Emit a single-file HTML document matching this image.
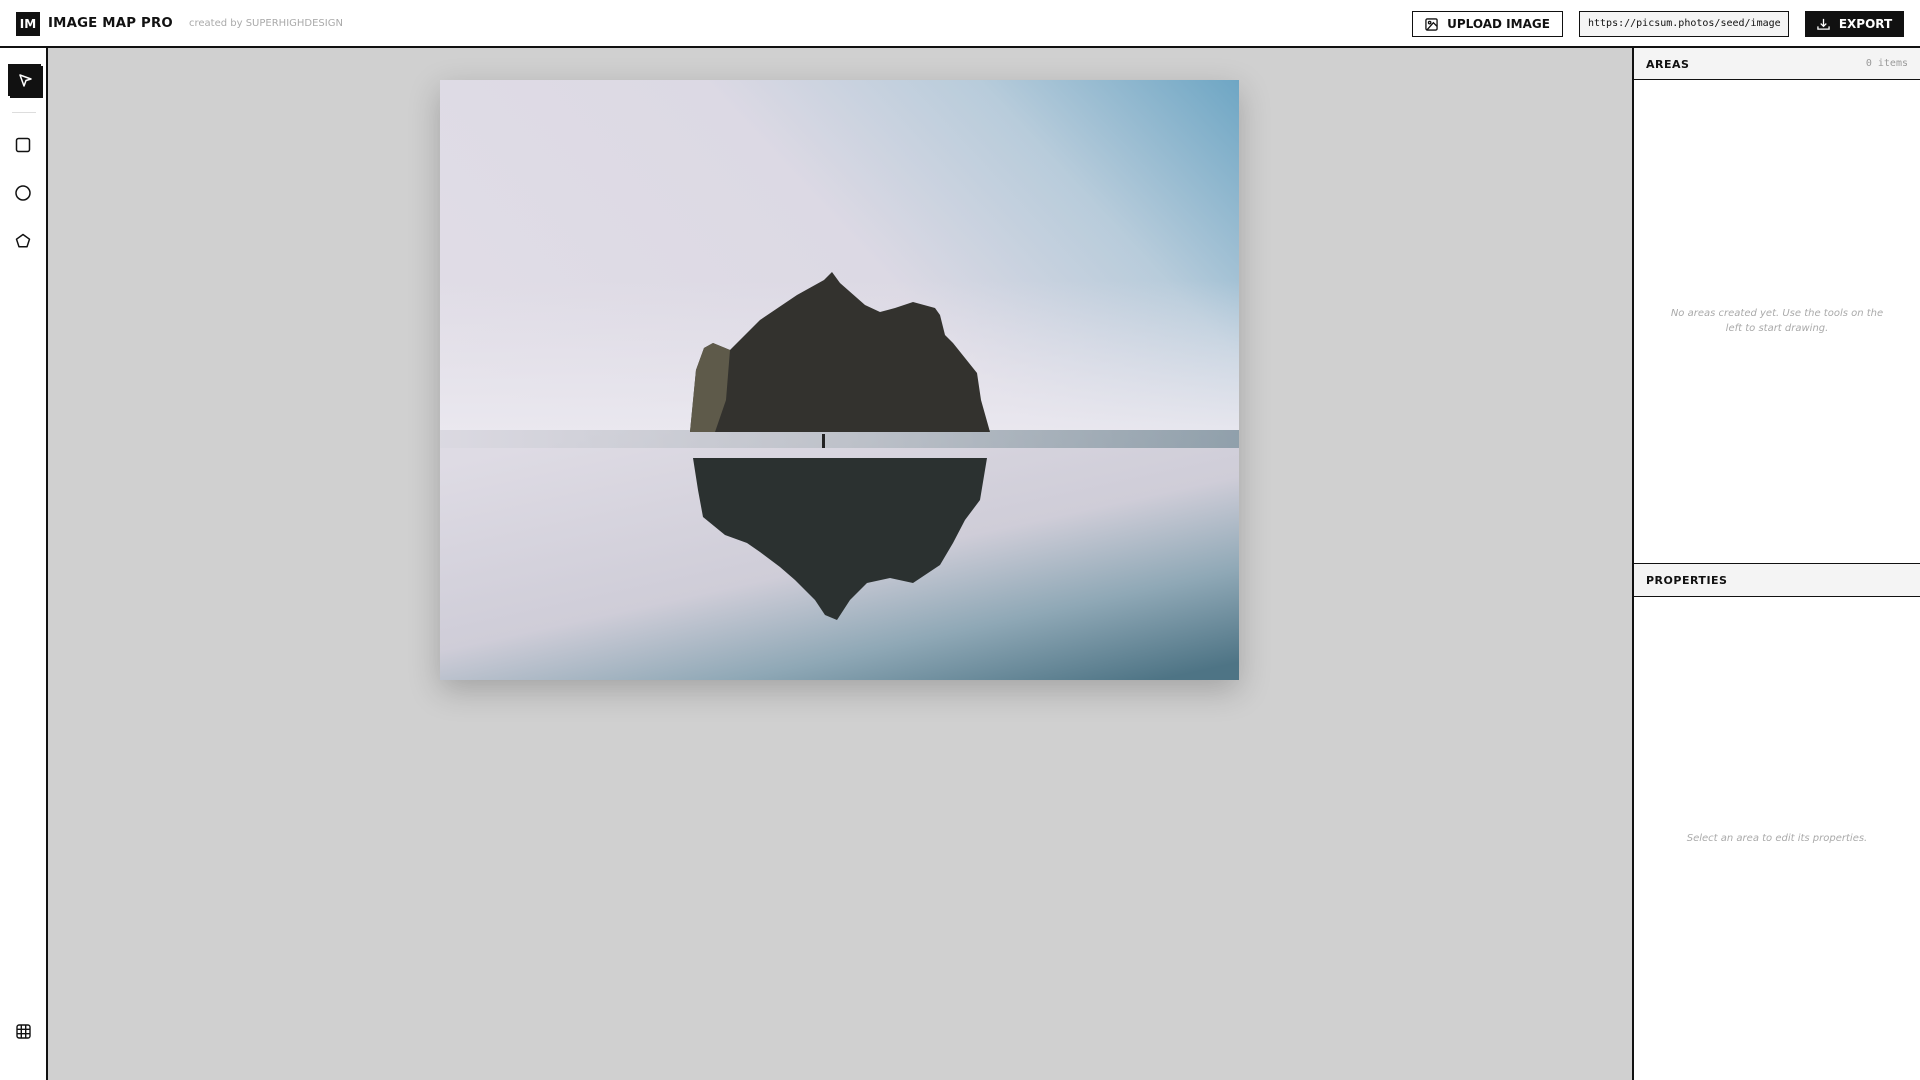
<!DOCTYPE html>
<html><head><meta charset="utf-8"><style>
*{box-sizing:border-box;margin:0;padding:0}
body{width:1920px;height:1080px;overflow:hidden;font-family:"DejaVu Sans","Liberation Sans",sans-serif;background:#fff;position:relative;color:#111}
.hdr{position:absolute;left:0;top:0;width:1920px;height:48px;border-bottom:2px solid #111;background:#fff}
.logo{position:absolute;left:16px;top:12px;width:24px;height:24px;background:#111;color:#fff;font-weight:bold;font-size:12px;line-height:24px;text-align:center}
.title{position:absolute;left:48px;top:16px;font-weight:bold;font-size:13.3px;letter-spacing:.2px}
.by{position:absolute;left:189px;top:18px;font-size:10px;color:#aaa}
.btn{position:absolute;top:11px;height:26px;border:1.5px solid #111;font-weight:bold;font-size:12px;display:flex;align-items:center;justify-content:center;gap:9px}
.url{position:absolute;left:1579px;top:11px;width:210px;height:26px;border:1.5px solid #111;background:#f4f4f4;font-family:"DejaVu Sans Mono","Liberation Mono",monospace;font-size:10px;line-height:23px;padding-left:8px;overflow:hidden;white-space:nowrap}
.side{position:absolute;left:0;top:48px;width:48px;height:1032px;border-right:2px solid #111;background:#fff}
.canvas{position:absolute;left:48px;top:48px;width:1584px;height:1032px;background:#d0d0d0}
.right{position:absolute;left:1632px;top:48px;width:288px;height:1032px;border-left:2px solid #111;background:#fff}
.ph{position:absolute;left:0;width:286px;height:32px;background:#f4f4f4;border-bottom:1.5px solid #111;font-weight:bold;font-size:11px;padding:10px 0 0 12px;letter-spacing:.5px}
.empty{position:absolute;left:0;width:286px;text-align:center;font-style:italic;font-size:10px;color:#aaa;line-height:15px}
</style></head><body>
<div class="hdr">
 <div class="logo">IM</div>
 <div class="title">IMAGE MAP PRO</div>
 <div class="by">created by SUPERHIGHDESIGN</div>
 <div class="btn" style="left:1412px;width:151px;background:#fff"><svg width="13" height="13" viewBox="0 0 14 14" fill="none" stroke="#111" stroke-width="1.4"><rect x="1" y="1" width="12" height="12" rx="1.5"/><circle cx="5" cy="5" r="1.3"/><path d="M13 9L9 5 2 13"/></svg>UPLOAD IMAGE</div>
 <div class="url">https://picsum.photos/seed/image</div>
 <div class="btn" style="left:1805px;width:99px;background:#111;color:#fff;border-color:#111"><svg width="13" height="13" viewBox="0 0 14 14" fill="none" stroke="#fff" stroke-width="1.4"><path d="M7 1v8M4 6l3 3 3-3M1 9v3h12V9"/></svg>EXPORT</div>
</div>
<div class="side">
 <div style="position:absolute;left:10px;top:18px;width:33px;height:32px;background:#111"></div>
 <div style="position:absolute;left:8px;top:16px;width:33px;height:32px;background:#111;display:flex;align-items:center;justify-content:center"><svg width="16" height="16" viewBox="0 0 16 16" fill="none" stroke="#fff" stroke-width="1.5" stroke-linejoin="round"><path d="M3 3l11 4-5 1.5L7 14z"/></svg></div>
 <div style="position:absolute;left:12px;top:64px;width:24px;height:1px;background:#ddd"></div>
 <svg style="position:absolute;left:15px;top:89px" width="16" height="16" viewBox="0 0 16 16" fill="none" stroke="#111" stroke-width="1.5"><rect x="1.5" y="1.5" width="13" height="13" rx="2"/></svg>
 <svg style="position:absolute;left:15px;top:137px" width="16" height="16" viewBox="0 0 16 16" fill="none" stroke="#111" stroke-width="1.5"><circle cx="8" cy="8" r="7"/></svg>
 <svg style="position:absolute;left:15px;top:185px" width="16" height="16" viewBox="0 0 16 16" fill="none" stroke="#111" stroke-width="1.5" stroke-linejoin="round"><path d="M8 1.5l6.5 4.7-2.5 7.6H4L1.5 6.2z"/></svg>
 <svg style="position:absolute;left:16px;top:976px" width="15" height="15" viewBox="0 0 15 15" fill="none" stroke="#111" stroke-width="1.4"><rect x="1" y="1" width="13" height="13" rx="2"/><path d="M5.3 1v13M9.7 1v13M1 5.3h13M1 9.7h13"/></svg>
</div>
<div class="canvas">
 <svg style="position:absolute;left:392px;top:32px;box-shadow:0 10px 30px rgba(0,0,0,.22)" width="799" height="600" viewBox="0 0 799 600">
  <defs>
   <linearGradient id="sky" x1="0" y1="0.7" x2="1" y2="0"><stop offset="0" stop-color="#e2dee7"/><stop offset=".55" stop-color="#dcd9e4"/><stop offset=".78" stop-color="#b8ccdb"/><stop offset="1" stop-color="#6ea6c4"/></linearGradient>
   <linearGradient id="skyb" x1="0" y1="0" x2="0" y2="1"><stop offset="0" stop-color="#e8e6ee" stop-opacity="0"/><stop offset="1" stop-color="#ebe9f0" stop-opacity=".9"/></linearGradient>
   <linearGradient id="sea" x1="0.2" y1="0" x2="0.9" y2="1"><stop offset="0" stop-color="#dedbe4"/><stop offset=".5" stop-color="#cfcdd8"/><stop offset=".75" stop-color="#8fa8b6"/><stop offset="1" stop-color="#4e7485"/></linearGradient>
   <linearGradient id="band" x1="0" y1="0" x2="1" y2="0"><stop offset="0" stop-color="#d8d7df"/><stop offset=".5" stop-color="#a9b2b8"/><stop offset="1" stop-color="#5a7884"/></linearGradient>
  </defs>
  <rect width="799" height="600" fill="url(#sky)"/>
  <rect y="200" width="799" height="152" fill="url(#skyb)"/>
  <rect y="350" width="799" height="250" fill="url(#sea)"/>
  <rect y="350" width="799" height="18" fill="url(#band)" opacity=".55"/>
  <path d="M250 352 L256 290 L264 268 L273 263 L290 270 L320 240 L357 215 L384 200 L392 192 L400 203 L425 225 L440 232 L455 228 L473 222 L495 228 L500 235 L505 255 L513 263 L537 293 L541 320 L550 352Z" fill="#33322e"/>
  <path d="M250 352 L256 290 L264 268 L273 263 L290 270 L286 320 L275 352Z" fill="#5e5a4a"/>
  <path d="M253 378 L547 378 L540 420 L525 440 L513 463 L500 485 L473 503 L450 498 L427 503 L410 520 L397 540 L385 535 L375 520 L355 500 L340 487 L320 472 L307 463 L285 455 L263 437 L258 410Z" fill="#2b3130"/>
  <rect x="382" y="354" width="3" height="14" fill="#222"/>
 </svg>
</div>
<div class="right">
 <div class="ph" style="top:0">AREAS<span style="position:absolute;right:12px;top:10px;font-weight:normal;font-family:'DejaVu Sans Mono',monospace;color:#999;font-size:10px;letter-spacing:0">0 items</span></div>
 <div class="empty" style="top:258px">No areas created yet. Use the tools on the<br>left to start drawing.</div>
 <div class="ph" style="top:515px;border-top:1.5px solid #111;height:34px">PROPERTIES</div>
 <div class="empty" style="top:783px">Select an area to edit its properties.</div>
</div>
</body></html>
